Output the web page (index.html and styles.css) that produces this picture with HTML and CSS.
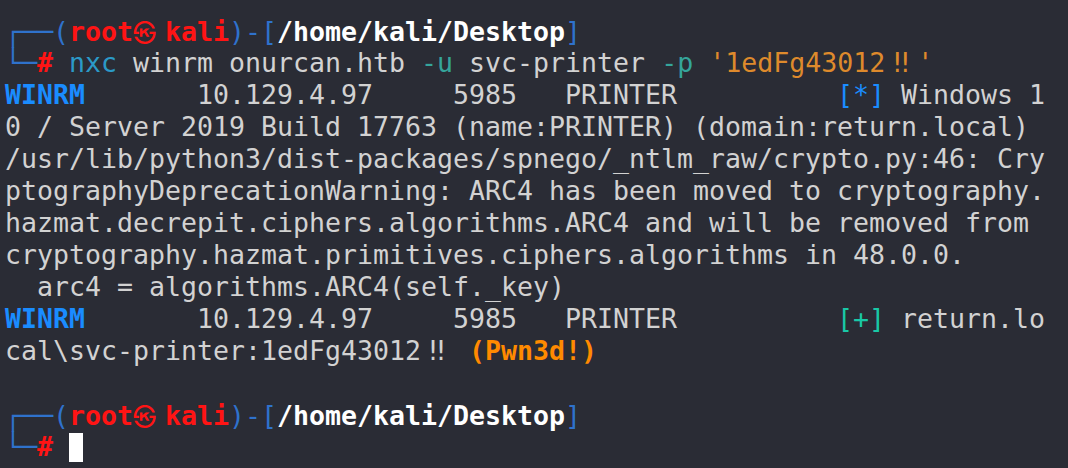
FILE: index.html
```html
<!DOCTYPE html>
<html lang="en">
<head>
<meta charset="utf-8">
<title>Terminal</title>
<link rel="stylesheet" href="styles.css">
</head>
<body>
<main class="term">
<div class="ln"><span class="box">┌──(</span><span class="usr">root<span class="at">㉿</span>kali</span><span class="box">)-[</span><span class="path">/home/kali/Desktop</span><span class="box">]</span></div>
<div class="ln"><span class="box">└─</span><span class="usr">#</span> <span class="cmd">nxc</span> winrm onurcan.htb <span class="opt">-u</span> svc-printer <span class="opt">-p</span> <span class="str">'1edFg43012<span class="lig">!!</span>'</span></div>
<div class="ln"><span class="proto">WINRM</span>       10.129.4.97     5985   PRINTER          <span class="info">[*]</span> Windows 1</div>
<div class="ln">0 / Server 2019 Build 17763 (name:PRINTER) (domain:return.local)</div>
<div class="ln">/usr/lib/python3/dist-packages/spnego/_ntlm_raw/crypto.py:46: Cry</div>
<div class="ln">ptographyDeprecationWarning: ARC4 has been moved to cryptography.</div>
<div class="ln">hazmat.decrepit.ciphers.algorithms.ARC4 and will be removed from</div>
<div class="ln">cryptography.hazmat.primitives.ciphers.algorithms in 48.0.0.</div>
<div class="ln">  arc4 = algorithms.ARC4(self._key)</div>
<div class="ln"><span class="proto">WINRM</span>       10.129.4.97     5985   PRINTER          <span class="ok">[+]</span> return.lo</div>
<div class="ln">cal\svc-printer:1edFg43012<span class="lig">!!</span> <span class="pwn">(Pwn3d!)</span></div>
<div class="ln"> </div>
<div class="ln"><span class="box">┌──(</span><span class="usr">root<span class="at">㉿</span>kali</span><span class="box">)-[</span><span class="path">/home/kali/Desktop</span><span class="box">]</span></div>
<div class="ln"><span class="box">└─</span><span class="usr">#</span> <span class="cursor"></span></div>
</main>
</body>
</html>
```

FILE: styles.css
```css
html, body {
  margin: 0;
  padding: 0;
  background: #2a2c35;
  height: 100%;
  overflow: hidden;
}

.term {
  padding: 15px 0 0 5px;
  font-family: "DejaVu Sans Mono", "Liberation Mono", monospace;
  font-size: 26.58px;
  color: #d2d2d2;
}

.ln {
  height: 32px;
  line-height: 32px;
  white-space: pre;
}

.box {
  color: #2f72cc;
}

.usr {
  color: #ff1414;
  font-weight: bold;
}

.at {
  display: inline-block;
  width: 32px;
  text-align: left;
  font-family: "Noto Sans CJK KR", sans-serif;
  font-size: 23px;
  font-weight: bold;
  box-sizing: border-box;
}

.path {
  color: #ffffff;
  font-weight: bold;
}

.cmd {
  color: #2b9ac8;
}

.opt {
  color: #35a59b;
}

.str {
  color: #de8a2c;
}

.lig {
  display: inline-block;
  width: 32px;
  letter-spacing: -8px;
  padding-left: 4px;
  box-sizing: border-box;
}

.proto {
  color: #1a8cff;
  font-weight: bold;
}

.info {
  color: #1a8cff;
}

.ok {
  color: #19c8a6;
}

.pwn {
  color: #ff8a00;
  font-weight: bold;
}

.cursor {
  display: inline-block;
  width: 14px;
  height: 29px;
  background: #ffffff;
  vertical-align: -6px;
}
```
